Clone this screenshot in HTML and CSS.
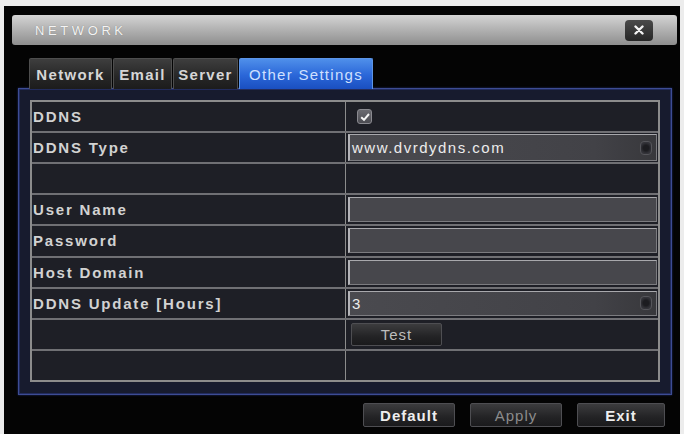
FILE: index.html
```html
<!DOCTYPE html>
<html>
<head>
<meta charset="utf-8">
<link rel="stylesheet" href="styles.css">
</head>
<body>
<div class="window">
  <div class="titlebar">
    <span class="title">NETWORK</span>
    <span class="close"><svg width="10" height="10" viewBox="0 0 10 10"><path d="M1.5 1.5 L8.5 8.5 M8.5 1.5 L1.5 8.5" stroke="#f2f2f2" stroke-width="2.4" stroke-linecap="round"/></svg></span>
  </div>
  <div class="tabs">
    <div class="tab tab-network">Network</div>
    <div class="tab tab-email">Email</div>
    <div class="tab tab-server">Server</div>
    <div class="tab active">Other Settings</div>
  </div>
  <div class="panel">
    <div class="table">
      <div class="row">
        <div class="label">DDNS</div>
        <div class="value">
          <span class="checkbox"><svg width="12" height="12" viewBox="0 0 12 12"><path d="M2.2 6.2 L5 8.8 L10 3" fill="none" stroke="#f4f4f4" stroke-width="2"/></svg></span>
        </div>
      </div>
      <div class="row">
        <div class="label">DDNS Type</div>
        <div class="value">
          <div class="field select select-tall"><span>www.dvrdydns.com</span><span class="knob"></span></div>
        </div>
      </div>
      <div class="row">
        <div class="label"></div>
        <div class="value"></div>
      </div>
      <div class="row">
        <div class="label">User Name</div>
        <div class="value"><div class="field"></div></div>
      </div>
      <div class="row">
        <div class="label">Password</div>
        <div class="value"><div class="field"></div></div>
      </div>
      <div class="row">
        <div class="label">Host Domain</div>
        <div class="value"><div class="field"></div></div>
      </div>
      <div class="row">
        <div class="label">DDNS Update [Hours]</div>
        <div class="value">
          <div class="field select"><span>3</span><span class="knob"></span></div>
        </div>
      </div>
      <div class="row">
        <div class="label"></div>
        <div class="value"><div class="btn btn-test">Test</div></div>
      </div>
      <div class="row">
        <div class="label"></div>
        <div class="value"></div>
      </div>
    </div>
  </div>
  <div class="actions">
    <div class="btn btn-action">Default</div>
    <div class="btn btn-action disabled">Apply</div>
    <div class="btn btn-action btn-exit">Exit</div>
  </div>
</div>
</body>
</html>
```

FILE: styles.css
```css
* { box-sizing: border-box; }
html, body { margin: 0; padding: 0; }
body {
  background: #ececec;
  width: 684px;
  height: 434px;
  overflow: hidden;
  font-family: "Liberation Sans", Arial, sans-serif;
}
.window {
  margin: 6px 4px 0 4px;
  width: 676px;
  height: 428px;
  background: #040404;
  padding: 9px 3px 0 8px;
  display: flex;
  flex-direction: column;
}
.titlebar {
  height: 30px;
  flex: none;
  border-radius: 3px;
  background: linear-gradient(#d4d4d4, #b4b4b4 45%, #8e8e8e);
  display: flex;
  align-items: center;
  justify-content: space-between;
  padding: 0 24px 0 23px;
}
.title {
  color: #f4f4f4;
  font-size: 13px;
  letter-spacing: 3.6px;
  text-shadow: 0 0 1px #777;
}
.close {
  width: 28px;
  height: 21px;
  border-radius: 4px;
  background: linear-gradient(#4a4a4a, #262626);
  display: flex;
  align-items: center;
  justify-content: center;
}
.tabs {
  display: flex;
  gap: 1px;
  margin: 13px 0 0 17px;
  height: 31px;
  flex: none;
  position: relative;
  z-index: 1;
}
.tab {
  height: 31px;
  padding: 0 4px;
  display: flex;
  align-items: center;
  justify-content: center;
  font-size: 15px;
  font-weight: bold;
  letter-spacing: 1.3px;
  color: #d6d6d6;
  background: linear-gradient(#3e3e3e, #262626 60%, #1c1c1c);
  border: 1px solid #4e4e4e;
  border-bottom: none;
  border-radius: 2px 2px 0 0;
}
.tab-network { width: 83px; }
.tab-email { width: 59px; }
.tab-server { width: 65px; }
.tab.active {
  width: 134px;
  color: #cfe0ff;
  font-weight: normal;
  background: linear-gradient(#4f8fea, #2a66d8 55%, #1a4fc0);
  border-color: #5c94e6;
}
.panel {
  margin: -1px 0 0 6px;
  width: 654px;
  height: 307px;
  flex: none;
  background: #171b2e;
  border: 1px solid #3d4c94;
  box-shadow: inset 0 0 0 1px #222c5e, 0 0 2px #1f2c66;
  padding: 11px 11px 0 11px;
}
.table {
  height: 282px;
  width: 630px;
  border: 2px solid #8c8c8c;
  display: flex;
  flex-direction: column;
  background: #1e1f26;
}
.row {
  flex: 1;
  display: flex;
  border-bottom: 2px solid #707074;
}
.row:last-child { border-bottom: none; }
.label {
  width: 314px;
  flex: none;
  border-right: 1px solid #8c8c8c;
  display: flex;
  align-items: center;
  padding-left: 1px;
  font-size: 15px;
  font-weight: bold;
  letter-spacing: 1.8px;
  color: #d2d2d2;
}
.value {
  flex: 1;
  display: flex;
  align-items: center;
  padding: 0 1px 0 2px;
}
.checkbox {
  margin-left: 9px;
  width: 15px;
  height: 15px;
  border-radius: 3px;
  border: 1px solid #8a8a90;
  background: linear-gradient(#6a6a70, #4c4c52);
  display: flex;
  align-items: center;
  justify-content: center;
}
.field {
  width: 309px;
  height: 25px;
  background: #47474c;
  border: 1px solid #7c7c80;
  border-top-color: #a8a8ac;
  border-left: 2px solid #b4b4b8;
}
.select {
  display: flex;
  align-items: center;
  justify-content: space-between;
  padding: 0 4px 0 2px;
  color: #ececec;
  font-size: 15px;
  letter-spacing: 1.5px;
  background: linear-gradient(90deg, #4a4a4f, #424247 80%, #38383c);
}
.select-tall { height: 27px; }
.knob {
  width: 12px;
  height: 14px;
  border-radius: 4px;
  background: radial-gradient(circle, #1c1c20 35%, #34343a 70%, #2a2a2e);
  border: 1px solid #55555a;
}
.btn {
  display: flex;
  align-items: center;
  justify-content: center;
  border-radius: 2px;
  background: linear-gradient(#3c3c3e, #232325 60%, #1a1a1c);
  border: 1px solid #4e4e52;
  font-size: 15px;
  letter-spacing: 1px;
}
.btn-test {
  margin-left: 3px;
  width: 91px;
  height: 23px;
  color: #bdbdbd;
}
.actions {
  display: flex;
  justify-content: flex-end;
  gap: 15px;
  margin-top: 8px;
  padding-right: 12px;
}
.btn-action {
  width: 92px;
  height: 24px;
  color: #eeeeee;
  font-weight: bold;
}
.btn-action.disabled {
  color: #8c8c8c;
  font-weight: normal;
}
.btn-exit { width: 88px; }
```
